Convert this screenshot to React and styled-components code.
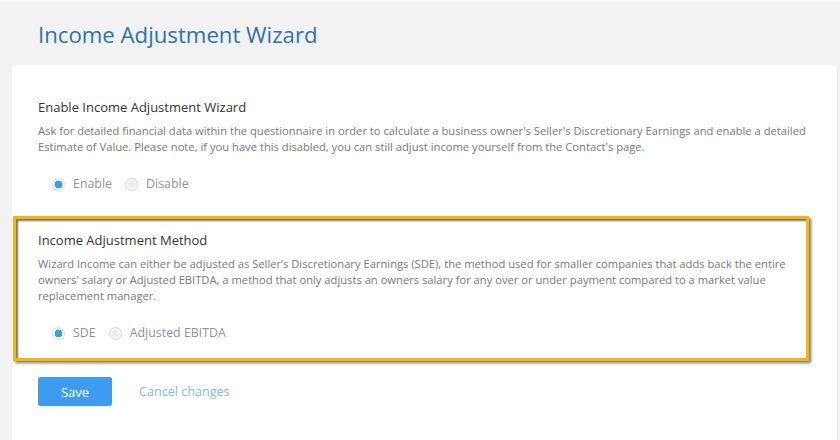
import React, { useState } from 'react';
import styled, { createGlobalStyle, css } from 'styled-components';

const GlobalStyle = createGlobalStyle`
    html, body {
        margin: 0;
        padding: 0;
        background: #f2f2f2;
        font-family: "Open Sans", "Liberation Sans", sans-serif;
    }
`

const App = () => {
    const [enabled, setEnabled] = useState('enable');
    const [method, setMethod] = useState('sde');

    return (
        <Page>
            <GlobalStyle />
            <Header>
                <Title>Income Adjustment Wizard</Title>
            </Header>
            <Card>
                <Section>
                    <Heading>Enable Income Adjustment Wizard</Heading>
                    <Description>
                        Ask for detailed financial data within the questionnaire in order to calculate a business owner's Seller's Discretionary Earnings and enable a detailed Estimate of Value. Please note, if you have this disabled, you can still adjust income yourself from the Contact's page.
                    </Description>
                    <RadioRow>
                        <Radio label="Enable" checked={enabled === 'enable'} onClick={() => setEnabled('enable')} />
                        <Radio label="Disable" checked={enabled === 'disable'} onClick={() => setEnabled('disable')} />
                    </RadioRow>
                </Section>

                <Highlight>
                    <Heading>Income Adjustment Method</Heading>
                    <Description narrow>
                        Wizard Income can either be adjusted as Seller’s Discretionary Earnings (SDE), the method used for smaller companies that adds back the entire owners' salary or Adjusted EBITDA, a method that only adjusts an owners salary for any over or under payment compared to a market value replacement manager.
                    </Description>
                    <RadioRow>
                        <Radio label="SDE" checked={method === 'sde'} onClick={() => setMethod('sde')} />
                        <Radio label="Adjusted EBITDA" checked={method === 'ebitda'} onClick={() => setMethod('ebitda')} />
                    </RadioRow>
                </Highlight>

                <Actions>
                    <Button>Save</Button>
                    <CancelLink href="#">Cancel changes</CancelLink>
                </Actions>
            </Card>
        </Page>
    )
}

const Radio = ({ label, checked, onClick }) => (
    <RadioLabel onClick={onClick}>
        <RadioCircle checked={checked} />
        <span>{label}</span>
    </RadioLabel>
)

export default App;

const Page = styled.div`
    min-height: 440px;
    padding-left: 12px;
    padding-right: 2px;
    border-top: 2px solid #f8f8f8;
    box-sizing: border-box;
`

const Header = styled.div`
    padding: 18px 0 15px 26px;
`

const Title = styled.h1`
    margin: 0;
    font-size: 22.2px;
    line-height: 30px;
    font-weight: 400;
    color: #2f72ad;
`

const Card = styled.div`
    background: #fff;
    border-radius: 3px 3px 0 0;
    padding: 32px 26px 40px 26px;
    min-height: 375px;
    box-sizing: border-box;
    border-right: 1px solid #e6e6e6;
`

const Section = styled.div`
    padding-bottom: 22px;
`

const Heading = styled.div`
    font-size: 13px;
    line-height: 20px;
    color: #333;
`

const Description = styled.p`
    margin: 6px 0 0 0;
    font-size: 11.2px;
    line-height: 16px;
    color: #787878;
    max-width: 775px;
    ${props => props.narrow && css`
        max-width: 752px;
    `}
`

const RadioRow = styled.div`
    display: flex;
    align-items: center;
    gap: 13px;
    margin-top: 19px;
    padding-left: 14px;
`

const RadioLabel = styled.label`
    display: flex;
    align-items: center;
    gap: 8px;
    font-size: 12.4px;
    line-height: 20px;
    color: #929292;
    cursor: pointer;
`

const RadioCircle = styled.span`
    width: 13px;
    height: 13px;
    box-sizing: border-box;
    border-radius: 50%;
    border: 1px solid #d6d6d6;
    background: radial-gradient(circle, #e4e4e4 0, #f6f6f6 60%, #fff 100%);
    ${props => props.checked && css`
        border-color: #dcdcdc;
        background: radial-gradient(circle, #3a9fe8 0, #3a9fe8 3.6px, #fff 4.2px);
    `}
`

const Highlight = styled.div`
    margin: 0 0 0 -25px;
    width: 796px;
    box-sizing: border-box;
    border: 3px solid #f6b700;
    padding: 11px 0 15px 22px;
    box-shadow: inset 2px 2px 2px rgba(0, 0, 0, 0.55), 2px 2px 3px rgba(0, 0, 0, 0.55);
`

const Actions = styled.div`
    display: flex;
    align-items: center;
    gap: 27px;
    margin-top: 16px;
`

const Button = styled.button`
    border: none;
    outline: none;
    background: #3d9cf0;
    border-radius: 3px;
    width: 74px;
    height: 29px;
    padding: 0;
    cursor: pointer;
    color: #fff;
    font-family: inherit;
    font-size: 13px;
    box-shadow: 0 0 1px rgba(0, 0, 0, 0.25);
`

const CancelLink = styled.a`
    color: #80bbef;
    font-size: 12.6px;
    text-decoration: none;
`
